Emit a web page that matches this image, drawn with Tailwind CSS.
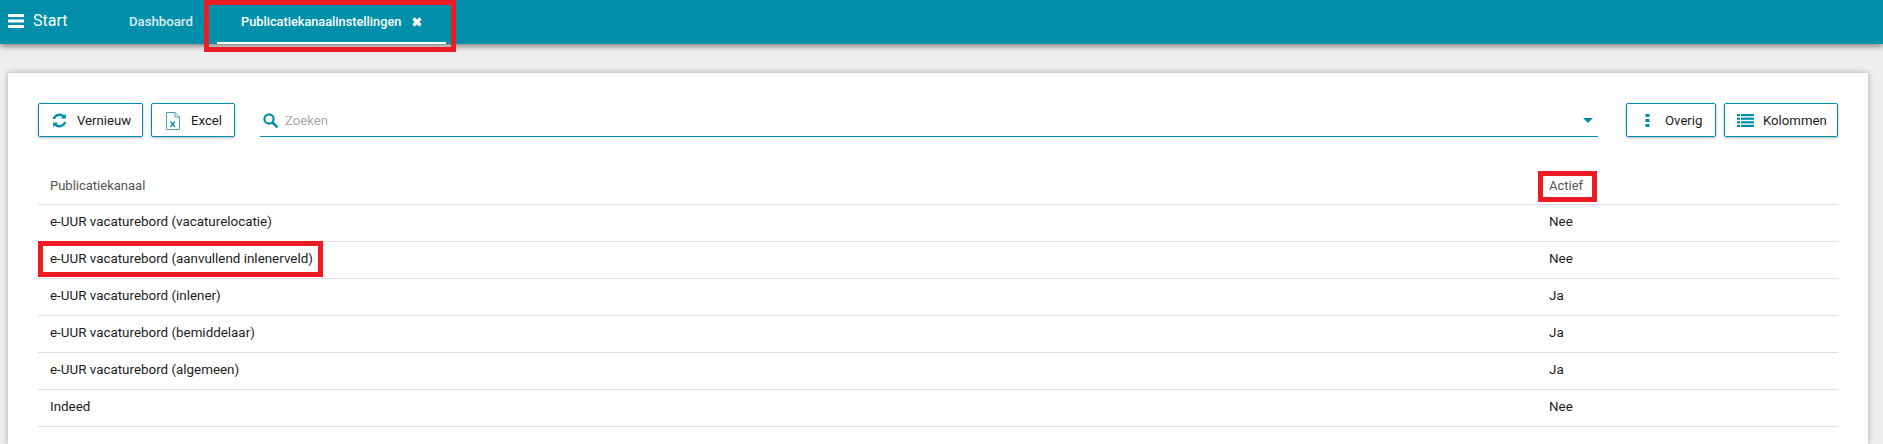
<!DOCTYPE html>
<html lang="nl">
<head>
  <meta charset="UTF-8" />
  <title>Publicatiekanaalinstellingen</title>
  <script src="https://cdn.jsdelivr.net/npm/@tailwindcss/browser@4"></script>
</head>
<body class="bg-[#eeeeee] h-[444px] overflow-hidden font-['Roboto',sans-serif] text-[13.2px] text-[#1c1c1c]">

  <!-- Topbar -->
  <header class="relative z-10 h-[44px] bg-[#008fab] text-white flex items-stretch shadow-[0_2px_6px_rgba(0,0,0,0.5)]">
    <div class="w-[116px] pl-[8px] flex items-center gap-[9px] text-[16px] pb-[2px]">
      <svg class="w-[16px] h-[14px]" viewBox="0 0 16 14" fill="#fff"><rect width="16" height="3" y="0" rx="0.5"/><rect width="16" height="3" y="5.5" rx="0.5"/><rect width="16" height="3" y="11" rx="0.5"/></svg>
      <span>Start</span>
    </div>
    <a class="w-[101px] pl-[13px] flex items-center font-medium text-white/85">Dashboard</a>
    <a class="relative w-[229px] pl-[24px] pt-[2px] flex items-center gap-[11px] text-[12.75px] font-medium border-b-2 border-white">
      <span>Publicatiekanaalinstellingen</span>
      <svg class="w-[10px] h-[10px]" viewBox="0 0 10 10" stroke="#fff" stroke-width="3.2"><path d="M1.5 1.5 8.5 8.5M8.5 1.5 1.5 8.5"/></svg>
    </a>
  </header>

  <!-- Kaart -->
  <main class="mt-[29px] ml-[8px] w-[1860px] h-[371px] overflow-hidden bg-white shadow-[0_0_6px_rgba(0,0,0,0.3)] pt-[30px] px-[30px]">
    <div class="flex items-start h-[34px]">
      <button class="w-[105px] h-[34px] pt-[1px] flex items-center gap-[10px] pl-[13px] border border-[#008fab] rounded-[2px] shadow-[0_1px_3px_rgba(0,0,0,0.3)]">
        <svg class="w-[15px] h-[15px]" viewBox="0 0 15 15" fill="none" stroke="#008fab" stroke-width="2.4"><path d="M1.8 6A6 6 0 0 1 12.2 4"/><path d="M13.2 9A6 6 0 0 1 2.8 11"/><path d="M13.8 0.8V5.6H9" fill="#008fab" stroke="none"/><path d="M1.2 14.2V9.4H6" fill="#008fab" stroke="none"/></svg>
        <span>Vernieuw</span>
      </button>
      <button class="ml-[8px] w-[84px] h-[34px] pt-[1px] flex items-center gap-[11px] pl-[14px] border border-[#008fab] rounded-[2px] shadow-[0_1px_3px_rgba(0,0,0,0.3)]">
        <svg class="w-[14px] h-[18px]" viewBox="0 0 14 18" fill="none" stroke="#4a9fb3" stroke-width="1"><path d="M.5.5H9L13.5 5V17.5H.5Z"/><path d="M9 .5V5H13.5"/><path d="M4.5 9.5 9 15M9 9.5 4.5 15" stroke="#008fab" stroke-width="1.3"/></svg>
        <span>Excel</span>
      </button>
      <div class="ml-[25px] w-[1338px] h-[34px] pt-[2px] flex items-center border-b border-[#008fab] pl-[3px] pr-[5px]">
        <svg class="w-[15px] h-[15px]" viewBox="0 0 15 15" fill="none" stroke="#008fab"><circle cx="6" cy="6" r="4.6" stroke-width="2.2"/><path d="M9.6 9.6 13.6 13.6" stroke-width="2.6" stroke-linecap="round"/></svg>
        <span class="ml-[7px] text-[#aaaaaa]">Zoeken</span>
        <span class="ml-auto w-0 h-0 border-x-[5px] border-x-transparent border-t-[5px] border-t-[#008fab]"></span>
      </div>
      <button class="ml-[28px] w-[90px] h-[34px] pt-[1px] flex items-center gap-[15px] pl-[18px] border border-[#008fab] rounded-[2px] shadow-[0_1px_3px_rgba(0,0,0,0.3)]">
        <svg class="w-[5px] h-[13px]" viewBox="0 0 5 13" fill="#008fab"><rect x="0.5" width="4" height="3"/><rect x="0.5" y="5" width="4" height="3"/><rect x="0.5" y="10" width="4" height="3"/></svg>
        <span>Overig</span>
      </button>
      <button class="ml-[8px] w-[114px] h-[34px] pt-[1px] flex items-center gap-[9px] pl-[12px] border border-[#008fab] rounded-[2px] shadow-[0_1px_3px_rgba(0,0,0,0.3)]">
        <svg class="w-[17px] h-[13px]" viewBox="0 0 17 13" fill="#008fab"><rect width="3" height="2.2"/><rect x="4" width="13" height="2.2"/><rect y="3.6" width="3" height="2.2"/><rect x="4" y="3.6" width="13" height="2.2"/><rect y="7.2" width="3" height="2.2"/><rect x="4" y="7.2" width="13" height="2.2"/><rect y="10.8" width="3" height="2.2"/><rect x="4" y="10.8" width="13" height="2.2"/></svg>
        <span>Kolommen</span>
      </button>
    </div>

    <table class="mt-[30px] w-[1800px] table-fixed border-collapse">
      <thead class="text-[13px] text-[#555555]">
        <tr class="h-[37px] border-b border-[#e0e0e0]"><th class="w-[1499px] pl-[12px] text-left font-normal">Publicatiekanaal</th><th class="text-left font-normal pl-[12px]">Actief</th></tr>
      </thead>
      <tbody class="text-[13.4px]">
        <tr class="h-[37px] border-b border-[#e0e0e0]"><td class="pl-[12px]">e-UUR vacaturebord (vacaturelocatie)</td><td class="pl-[12px]">Nee</td></tr>
        <tr class="h-[37px] border-b border-[#e0e0e0]"><td class="pl-[12px]">e-UUR vacaturebord (aanvullend inlenerveld)</td><td class="pl-[12px]">Nee</td></tr>
        <tr class="h-[37px] border-b border-[#e0e0e0]"><td class="pl-[12px]">e-UUR vacaturebord (inlener)</td><td class="pl-[12px]">Ja</td></tr>
        <tr class="h-[37px] border-b border-[#e0e0e0]"><td class="pl-[12px]">e-UUR vacaturebord (bemiddelaar)</td><td class="pl-[12px]">Ja</td></tr>
        <tr class="h-[37px] border-b border-[#e0e0e0]"><td class="pl-[12px]">e-UUR vacaturebord (algemeen)</td><td class="pl-[12px]">Ja</td></tr>
        <tr class="h-[37px] border-b border-[#e0e0e0]"><td class="pl-[12px]">Indeed</td><td class="pl-[12px]">Nee</td></tr>
      </tbody>
    </table>
  </main>

  <!-- Rode markeringen uit de handleiding -->
  <div class="absolute z-20 left-[204px] top-0 w-[252px] h-[52px] border-[5px] border-[#ed1c24]"></div>
  <div class="absolute z-20 left-[1538px] top-[171px] w-[59px] h-[31px] border-[5px] border-[#ed1c24]"></div>
  <div class="absolute z-20 left-[38px] top-[241px] w-[285px] h-[36px] border-[5px] border-[#ed1c24]"></div>
</body>
</html>
